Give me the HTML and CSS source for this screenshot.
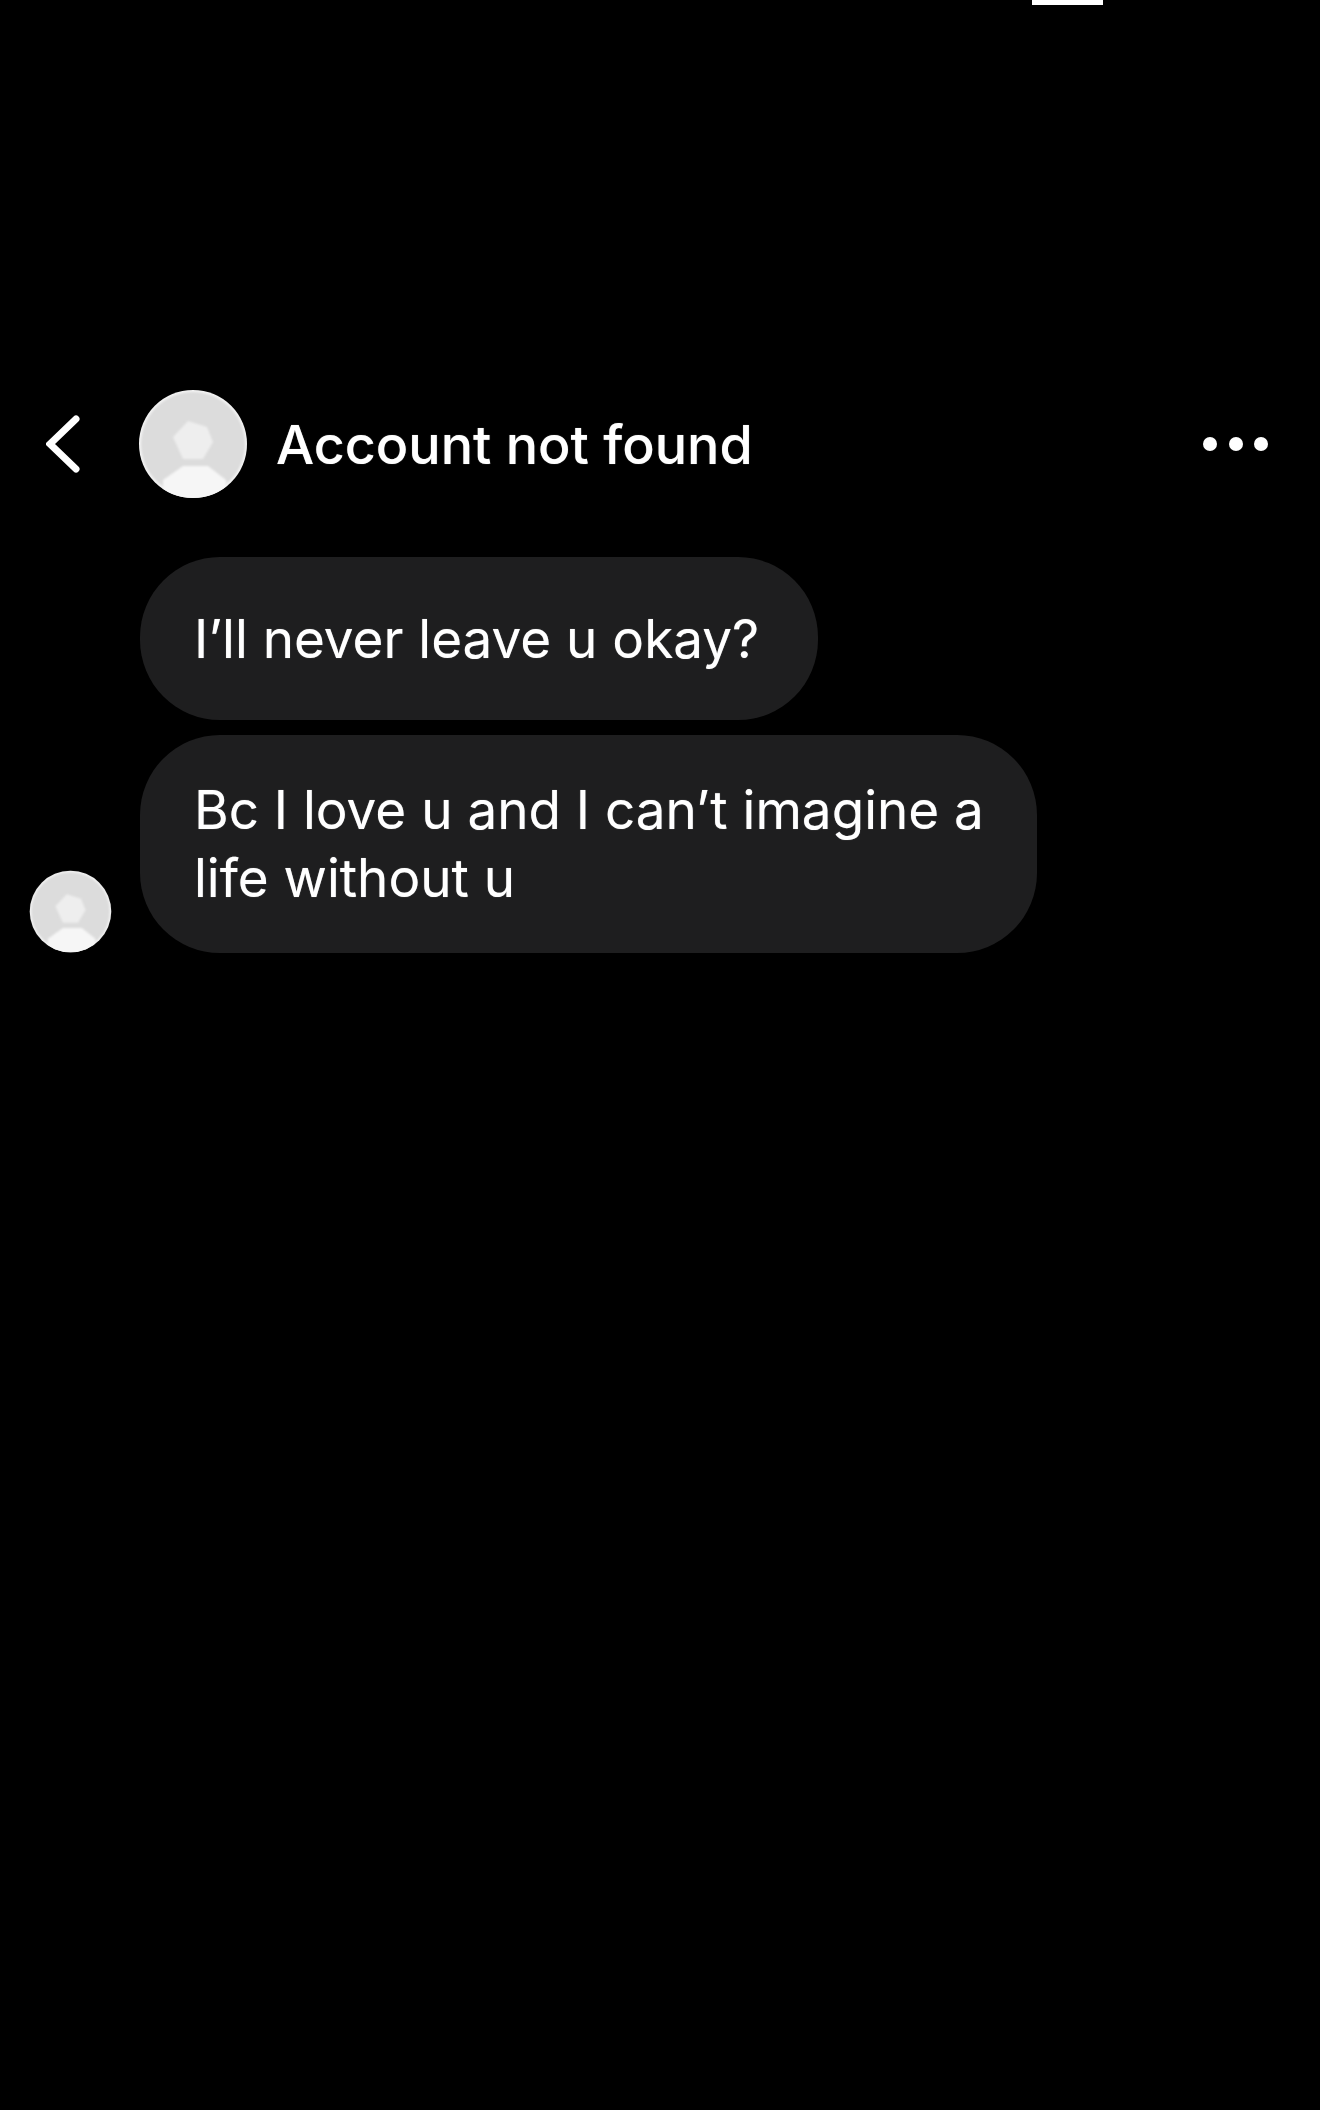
FILE: index.html
```html
<!DOCTYPE html>
<html lang="en">
<head>
    <meta charset="UTF-8">
    <meta name="viewport" content="width=device-width, initial-scale=1.0">
    <title>Account not found</title>
    <link rel="stylesheet" href="styles.css">
</head>
<body>
    <svg class="defs" width="0" height="0" aria-hidden="true">
        <defs>
            <clipPath id="avatarClip"><circle cx="55" cy="55" r="54"/></clipPath>
            <filter id="soft"><feGaussianBlur stdDeviation="1.2"/></filter>
            <symbol id="avatar" viewBox="0 0 110 110">
                <circle cx="55" cy="55" r="54" fill="#f4f4f4"/>
                <circle cx="55" cy="55" r="52" fill="#dcdcdc" filter="url(#soft)"/>
                <g clip-path="url(#avatarClip)" filter="url(#soft)">
                    <polygon points="50,32 69,38 75,53 65,70 45,70 35,48" fill="#eeeeee"/>
                    <path d="M25 91 L45 77 H70 L88 91 V110 H25 Z" fill="#f6f6f6"/>
                </g>
            </symbol>
        </defs>
    </svg>

    <div class="top-mark"></div>

    <header class="chat-header">
        <svg class="back-icon" viewBox="0 0 34 58" aria-label="Back">
            <path d="M30 4 L4 29 L30 54" fill="none" stroke="#fff" stroke-width="7" stroke-linecap="round" stroke-linejoin="miter"/>
        </svg>
        <svg class="avatar avatar-large"><use href="#avatar"/></svg>
        <h1 class="chat-title">Account not found</h1>
        <div class="more-dots">
            <span class="dot"></span>
            <span class="dot"></span>
            <span class="dot"></span>
        </div>
    </header>

    <main class="thread">
        <svg class="avatar avatar-small"><use href="#avatar"/></svg>
        <div class="bubbles">
            <p class="bubble bubble-single">I’ll never leave u okay?</p>
            <p class="bubble">Bc I love u and I can’t imagine a life without u</p>
        </div>
    </main>
</body>
</html>
```

FILE: styles.css
```css
* { box-sizing: border-box; }
body { margin: 0; background-color: #000; color: #fff; font-family: "Inter", "Liberation Sans", sans-serif; }
.defs { position: absolute; }

.top-mark { width: 71px; height: 5px; margin-left: 1032px; background-color: #fff; }

.chat-header { display: flex; align-items: center; height: 110px; margin-top: 384px; padding: 0 52px 0 46px; }
.back-icon { width: 34px; height: 58px; flex: none; }
.avatar { display: block; flex: none; }
.avatar-large { width: 110px; height: 110px; margin-left: 58px; }
.avatar-small { width: 83px; height: 83px; }
.chat-title { margin: 1px 0 0 28px; font-size: 53.8px; font-weight: 500; line-height: 60px; color: #fff; text-shadow: 0 0 1px rgba(255, 255, 255, 0.5); }
.more-dots { display: flex; gap: 11.5px; margin-left: auto; }
.dot { width: 14px; height: 14px; border-radius: 50%; background-color: #fff; }

.thread { display: flex; align-items: flex-end; gap: 28px; margin-top: 58px; padding-left: 29px; }
.bubbles { display: flex; flex-direction: column; align-items: flex-start; gap: 15px; }
.bubble { width: fit-content; max-width: 897px; margin: 0; padding: 41px 40px 41px 54px; background-color: #1e1e1f; border-radius: 80px; font-size: 53px; font-weight: 400; line-height: 68px; color: #fff; text-shadow: 0 0 1px rgba(255, 255, 255, 0.5); }
.bubble-single { padding: 48px 59px 47px 54px; }
```
